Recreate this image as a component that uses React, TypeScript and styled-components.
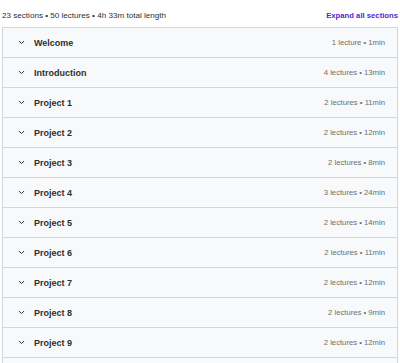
import styled, { createGlobalStyle } from "styled-components";

type Section = {
  title: string;
  lectures: number;
  minutes: number;
};

const sections: Section[] = [
  { title: "Welcome", lectures: 1, minutes: 1 },
  { title: "Introduction", lectures: 4, minutes: 13 },
  { title: "Project 1", lectures: 2, minutes: 11 },
  { title: "Project 2", lectures: 2, minutes: 12 },
  { title: "Project 3", lectures: 2, minutes: 8 },
  { title: "Project 4", lectures: 3, minutes: 24 },
  { title: "Project 5", lectures: 2, minutes: 14 },
  { title: "Project 6", lectures: 2, minutes: 11 },
  { title: "Project 7", lectures: 2, minutes: 12 },
  { title: "Project 8", lectures: 2, minutes: 9 },
  { title: "Project 9", lectures: 2, minutes: 12 },
  { title: "Project 10", lectures: 2, minutes: 10 },
];

const GlobalStyle = createGlobalStyle`
  body {
    margin: 0;
    background: #ffffff;
    font-family: "Liberation Sans", Arial, sans-serif;
    color: #2d2f31;
  }
  #root {
    height: 363px;
    overflow: hidden;
  }
`;

function Chevron() {
  return (
    <svg width="7" height="5" viewBox="0 0 7 5" fill="none">
      <path
        d="M1.2 1.3 L3.5 3.5 L5.8 1.3"
        stroke="#2d2f31"
        strokeWidth="1"
        strokeLinecap="round"
        strokeLinejoin="round"
      />
    </svg>
  );
}

export default function App() {
  return (
    <>
      <GlobalStyle />
      <Curriculum>
        <Header>
          <Summary>23 sections • 50 lectures • 4h 33m total length</Summary>
          <ExpandButton>Expand all sections</ExpandButton>
        </Header>
        <Panel>
          {sections.map((s) => (
            <Row key={s.title}>
              <RowTitle>
                <ChevronBox>
                  <Chevron />
                </ChevronBox>
                {s.title}
              </RowTitle>
              <RowMeta>
                {s.lectures} {s.lectures === 1 ? "lecture" : "lectures"} •{" "}
                {s.minutes}min
              </RowMeta>
            </Row>
          ))}
        </Panel>
      </Curriculum>
    </>
  );
}

const Curriculum = styled.div`
  padding: 0 2px;
`;

const Header = styled.div`
  height: 27px;
  display: flex;
  align-items: center;
  justify-content: space-between;
  padding-top: 4px;
  box-sizing: border-box;
`;

const Summary = styled.span`
  font-size: 8.1px;
  color: #2d2f31;
`;

const ExpandButton = styled.button`
  border: none;
  background: none;
  padding: 0;
  font-family: inherit;
  font-size: 7.7px;
  font-weight: 700;
  color: #5624d0;
  cursor: pointer;
`;

const Panel = styled.div`
  border: 1px solid #d1d7dc;
  border-bottom: none;
`;

const Row = styled.div`
  height: 29px;
  display: flex;
  align-items: center;
  justify-content: space-between;
  background: #f7f9fa;
  border-bottom: 1px solid #d1d7dc;
  padding: 0 12px 0 15px;
`;

const RowTitle = styled.div`
  display: flex;
  align-items: center;
  font-size: 9px;
  font-weight: 700;
  color: #2d2f31;
`;

const ChevronBox = styled.span`
  display: inline-flex;
  width: 16px;
`;

const RowMeta = styled.span`
  font-size: 7.7px;
  color: #6a6f73;
`;
